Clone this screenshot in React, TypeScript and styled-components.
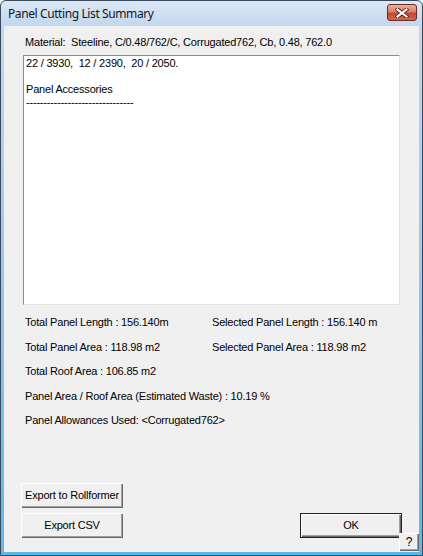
import React from 'react';
import styled, { createGlobalStyle } from 'styled-components';

const GlobalStyle = createGlobalStyle`
	html, body {
		margin: 0;
		padding: 0;
		background: #ffffff;
	}
`;

const Window = styled.div`
	width: 423px;
	height: 556px;
	box-sizing: border-box;
	border: 1px solid #3a4b60;
	border-radius: 6px 6px 0 0;
	background: linear-gradient(#dce8f5, #c4d7ee 24px, #8fc3ec 60%, #5ab8e8);
	padding: 0 3px 3px 3px;
	display: flex;
	flex-direction: column;
	font-family: 'Liberation Sans', Arial, sans-serif;
`;

const TitleBar = styled.div`
	height: 25px;
	display: flex;
	align-items: flex-start;
	justify-content: space-between;
	padding-left: 4px;
`;

const TitleText = styled.span`
	font-family: 'Noto Sans', 'Open Sans', sans-serif;
	font-size: 12px;
	line-height: 25px;
	color: #101820;
	letter-spacing: -0.4px;
`;

const CloseButton = styled.div`
	width: 30px;
	height: 17px;
	margin-top: 3px;
	margin-right: 2px;
	box-sizing: border-box;
	border: 1px solid #6c2a20;
	border-radius: 3px;
	background: linear-gradient(#eab0a2, #d9806d 45%, #c4472e 55%, #cf6a4f);
	display: flex;
	align-items: center;
	justify-content: center;
`;

const Client = styled.div`
	flex: 1;
	position: relative;
	background: #f0f0f0;
	padding: 10px 17px 14px 17px;
	display: flex;
	flex-direction: column;
	font-size: 11px;
	line-height: 13px;
	letter-spacing: -0.2px;
	color: #000;
`;

const Material = styled.div`
	padding-left: 4px;
	margin-bottom: 6px;
	white-space: pre;
`;

const TextBox = styled.div`
	margin: 0 2px;
	height: 250px;
	box-sizing: border-box;
	background: #fff;
	border-style: solid;
	border-width: 1px;
	border-color: #8c8c8c #e3e3e3 #e3e3e3 #8c8c8c;
	padding: 1px 2px;
	white-space: pre;
`;

const Stats = styled.div`
	margin-top: 11px;
	padding-left: 4px;
	display: grid;
	grid-template-columns: 187px 1fr;
	row-gap: 11.5px;
`;

const Wide = styled.div`
	grid-column: 1 / span 2;
`;

const Footer = styled.div`
	margin-top: auto;
	display: flex;
	justify-content: space-between;
	align-items: flex-end;
`;

const ButtonColumn = styled.div`
	display: flex;
	flex-direction: column;
	gap: 5px;
`;

const Button = styled.div<{ $default?: boolean }>`
	width: 102px;
	height: 25px;
	box-sizing: border-box;
	display: flex;
	align-items: center;
	justify-content: center;
	background: #f0f0f0;
	border: ${p => (p.$default ? '1px solid #202020' : 'none')};
	box-shadow: inset 1px 1px #ffffff, inset -1px -1px #696969, inset -2px -2px #a0a0a0;
`;

const HelpButton = styled.div`
	position: absolute;
	right: 0;
	bottom: 1px;
	width: 20px;
	height: 18px;
	box-sizing: border-box;
	display: flex;
	align-items: center;
	justify-content: center;
	background: #f0f0f0;
	box-shadow: inset 1px 1px #ffffff, inset -1px -1px #696969, inset -2px -2px #a0a0a0;
	font-size: 12px;
`;

const CloseIcon = () => (
	<svg width="14" height="10" viewBox="0 0 14 10">
		<path d="M2.5 1.5 L11.5 8.5 M11.5 1.5 L2.5 8.5" stroke="#5a2018" strokeWidth="4" strokeLinecap="square" />
		<path d="M2.5 1.5 L11.5 8.5 M11.5 1.5 L2.5 8.5" stroke="#ffffff" strokeWidth="2.2" strokeLinecap="square" />
	</svg>
);

const App = () => {
	return (
		<>
			<GlobalStyle />
			<Window>
				<TitleBar>
					<TitleText>Panel Cutting List Summary</TitleText>
					<CloseButton>
						<CloseIcon />
					</CloseButton>
				</TitleBar>
				<Client>
					<Material>Material:  Steeline, C/0.48/762/C, Corrugated762, Cb, 0.48, 762.0</Material>
					<TextBox>
						{'22 / 3930,  12 / 2390,  20 / 2050.\n\nPanel Accessories\n-------------------------------'}
					</TextBox>
					<Stats>
						<div>Total Panel Length : 156.140m</div>
						<div>Selected Panel Length : 156.140 m</div>
						<div>Total Panel Area : 118.98 m2</div>
						<div>Selected Panel Area : 118.98 m2</div>
						<Wide>Total Roof Area : 106.85 m2</Wide>
						<Wide>Panel Area / Roof Area (Estimated Waste) : 10.19 %</Wide>
						<Wide>Panel Allowances Used: &lt;Corrugated762&gt;</Wide>
					</Stats>
					<Footer>
						<ButtonColumn>
							<Button>Export to Rollformer</Button>
							<Button>Export CSV</Button>
						</ButtonColumn>
						<Button $default>OK</Button>
					</Footer>
					<HelpButton>?</HelpButton>
				</Client>
			</Window>
		</>
	);
};

export default App;
